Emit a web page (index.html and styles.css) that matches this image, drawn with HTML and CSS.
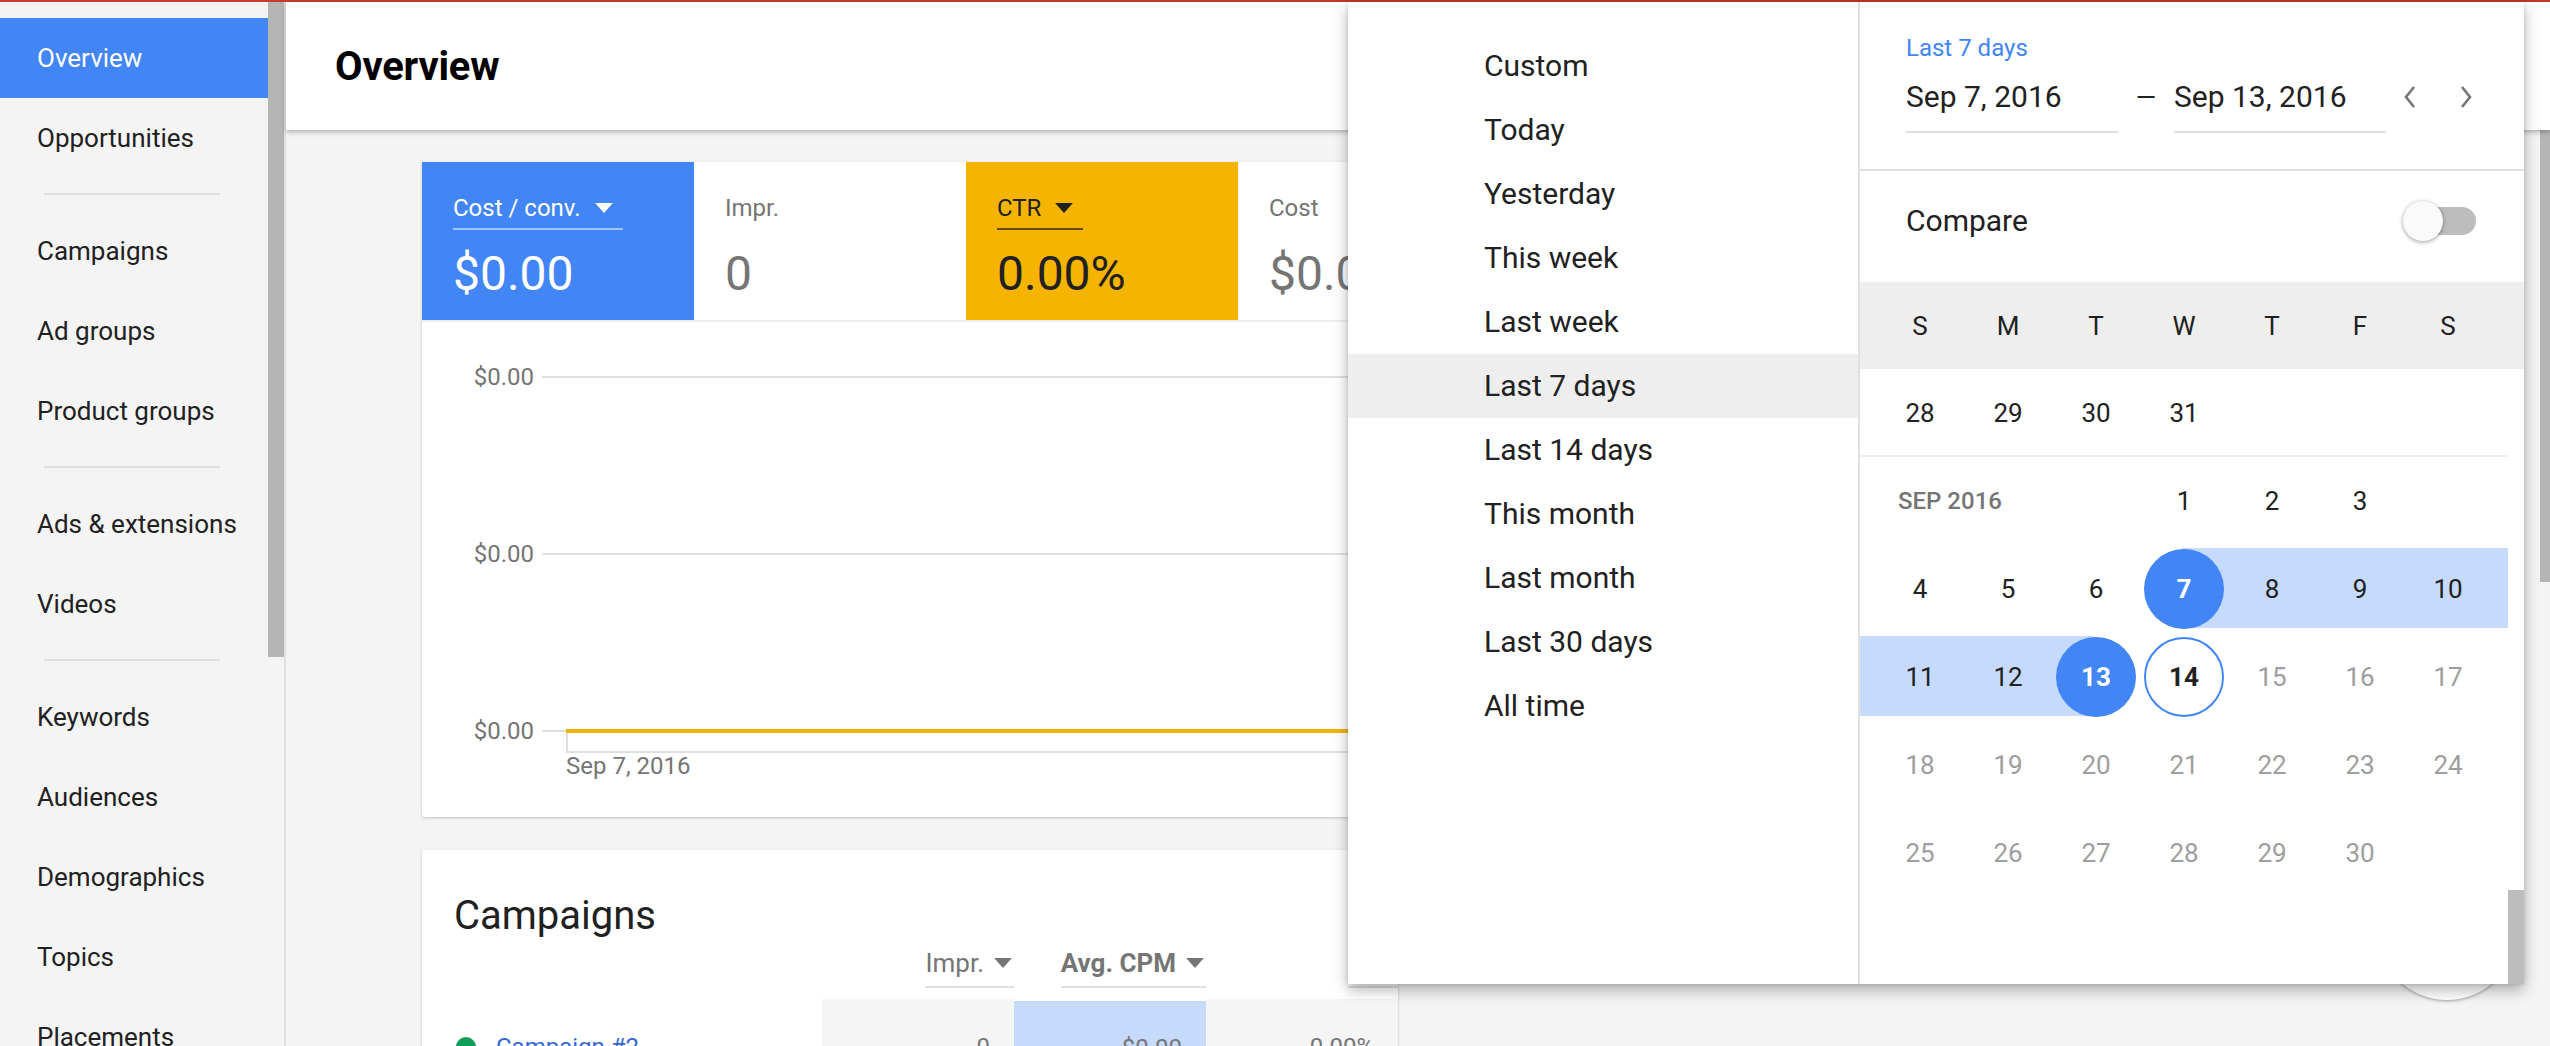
FILE: index.html
```html
<!DOCTYPE html>
<html lang="en">
<head>
<meta charset="utf-8">
<title>Overview</title>
<link rel="stylesheet" href="styles.css">
</head>
<body>
<div class="topline"></div>
<div class="app">
  <nav class="sidebar">
    <a class="nav-item active">Overview</a>
    <a class="nav-item">Opportunities</a>
    <div class="nav-divider"></div>
    <a class="nav-item">Campaigns</a>
    <a class="nav-item">Ad groups</a>
    <a class="nav-item">Product groups</a>
    <div class="nav-divider"></div>
    <a class="nav-item">Ads &amp; extensions</a>
    <a class="nav-item">Videos</a>
    <div class="nav-divider"></div>
    <a class="nav-item">Keywords</a>
    <a class="nav-item">Audiences</a>
    <a class="nav-item">Demographics</a>
    <a class="nav-item">Topics</a>
    <a class="nav-item">Placements</a>
  </nav>
  <div class="side-scroll"><div class="side-thumb"></div></div>
  <div class="side-border"></div>

  <main class="main">
    <header class="page-header"><h1 class="page-title">Overview</h1></header>
    <div class="main-body">
      <div class="content">
        <section class="card metrics-card">
          <div class="tiles">
            <div class="tile tile-blue">
              <div class="tile-label underlined">Cost / conv. <svg class="caret" viewBox="0 0 16 9"><path d="M0 0h16L8 9z"/></svg></div>
              <div class="tile-value">$0.00</div>
            </div>
            <div class="tile">
              <div class="tile-label">Impr.</div>
              <div class="tile-value">0</div>
            </div>
            <div class="tile tile-yellow">
              <div class="tile-label underlined">CTR <svg class="caret" viewBox="0 0 16 9"><path d="M0 0h16L8 9z"/></svg></div>
              <div class="tile-value">0.00%</div>
            </div>
            <div class="tile">
              <div class="tile-label">Cost</div>
              <div class="tile-value">$0.00</div>
            </div>
          </div>
          <div class="chart">
            <div class="grid-row"><span class="axis-label">$0.00</span><span class="grid-line"></span></div>
            <div class="grid-row"><span class="axis-label">$0.00</span><span class="grid-line"></span></div>
            <div class="grid-row"><span class="axis-label">$0.00</span><span class="grid-line base"><span class="tick"></span><span class="series"></span></span></div>
            <div class="x-axis"></div>
            <div class="x-label">Sep 7, 2016</div>
          </div>
        </section>

        <section class="card campaigns-card">
          <h2 class="card-title">Campaigns</h2>
          <div class="table-head">
            <div class="name-col"></div>
            <div class="col"><span class="th">Impr. <svg class="caret" viewBox="0 0 16 9"><path d="M0 0h16L8 9z"/></svg></span></div>
            <div class="col"><span class="th sorted">Avg. CPM <svg class="caret" viewBox="0 0 16 9"><path d="M0 0h16L8 9z"/></svg></span></div>
            <div class="col"><span class="th">CTR</span></div>
          </div>
          <div class="table-row">
            <div class="name-col"><span class="status-dot"></span><a class="campaign-link">Campaign #2</a></div>
            <div class="col cell">0</div>
            <div class="col cell highlight">$0.00</div>
            <div class="col cell">0.00%</div>
          </div>
        </section>
      </div>
      <div class="main-scroll"><div class="main-thumb"></div></div>
    </div>
  </main>
</div>

<div class="fab"></div>

<div class="date-popup">
  <ul class="presets">
    <li class="preset">Custom</li>
    <li class="preset">Today</li>
    <li class="preset">Yesterday</li>
    <li class="preset">This week</li>
    <li class="preset">Last week</li>
    <li class="preset selected">Last 7 days</li>
    <li class="preset">Last 14 days</li>
    <li class="preset">This month</li>
    <li class="preset">Last month</li>
    <li class="preset">Last 30 days</li>
    <li class="preset">All time</li>
  </ul>
  <div class="calendar">
    <div class="range-head">
      <div class="range-name">Last 7 days</div>
      <div class="range-row">
        <div class="date-field">Sep 7, 2016</div>
        <div class="dash">—</div>
        <div class="date-field">Sep 13, 2016</div>
        <button class="chev"><svg viewBox="0 0 14 24"><path d="M11 2L3 12l8 10"/></svg></button>
        <button class="chev"><svg viewBox="0 0 14 24"><path d="M3 2l8 10-8 10"/></svg></button>
      </div>
    </div>
    <div class="compare">
      <span class="compare-label">Compare</span>
      <span class="toggle"><span class="toggle-track"></span><span class="toggle-thumb"></span></span>
    </div>
    <div class="weekdays">
      <span>S</span><span>M</span><span>T</span><span>W</span><span>T</span><span>F</span><span>S</span>
    </div>
    <div class="cal-scroll">
      <div class="cal-body">
        <div class="week">
          <span class="day">28</span><span class="day">29</span><span class="day">30</span><span class="day">31</span>
        </div>
        <div class="month-sep"></div>
        <div class="week">
          <span class="month-label">SEP 2016</span>
          <span class="day">1</span><span class="day">2</span><span class="day">3</span>
        </div>
        <div class="week">
          <span class="band" style="left:322px;right:0"></span>
          <span class="day">4</span><span class="day">5</span><span class="day">6</span>
          <span class="day sel"><span class="num">7</span></span>
          <span class="day">8</span><span class="day">9</span><span class="day">10</span>
        </div>
        <div class="week">
          <span class="band" style="left:0;width:234px"></span>
          <span class="day">11</span><span class="day">12</span>
          <span class="day sel"><span class="num">13</span></span>
          <span class="day today"><span class="num">14</span></span>
          <span class="day future">15</span><span class="day future">16</span><span class="day future">17</span>
        </div>
        <div class="week">
          <span class="day future">18</span><span class="day future">19</span><span class="day future">20</span><span class="day future">21</span><span class="day future">22</span><span class="day future">23</span><span class="day future">24</span>
        </div>
        <div class="week">
          <span class="day future">25</span><span class="day future">26</span><span class="day future">27</span><span class="day future">28</span><span class="day future">29</span><span class="day future">30</span>
        </div>
      </div>
      <div class="cal-track"><div class="cal-thumb"></div></div>
    </div>
  </div>
</div>
</body>
</html>
```

FILE: styles.css
```css
* { box-sizing: border-box; }
html, body {
  margin: 0;
  padding: 0;
  width: 2550px;
  height: 1046px;
  overflow: hidden;
  background: #f4f4f4;
  font-family: Roboto, "Noto Sans", "Liberation Sans", sans-serif;
  color: #212121;
}
body { position: relative; }

.topline { height: 2px; background: #c93a2b; }

.app { display: flex; height: 1044px; }

/* Sidebar */
.sidebar {
  width: 268px;
  flex: none;
  background: #f4f4f4;
  padding-top: 16px;
  display: flex;
  flex-direction: column;
}
.nav-item {
  display: block;
  height: 80px;
  line-height: 80px;
  padding-left: 37px;
  font-size: 26px;
  color: #212121;
  white-space: nowrap;
  flex: none;
}
.nav-item.active { background: #4285f4; color: #fff; }
.nav-divider {
  flex: none;
  height: 2px;
  margin: 15px 48px 16px 44px;
  background: #dedede;
}
.side-scroll { width: 16px; flex: none; background: #f4f4f4; }
.side-thumb { height: 655px; background: #b5b5b5; }
.side-border { width: 2px; flex: none; background: #e0e0e0; }

/* Main */
.main { flex: 1; display: flex; flex-direction: column; min-width: 0; }
.page-header {
  height: 128px;
  flex: none;
  background: #fff;
  box-shadow: 0 2px 5px rgba(0,0,0,0.28);
  display: flex;
  align-items: center;
  padding-left: 49px;
  position: relative;
  z-index: 1;
}
.page-title { margin: 0; font-size: 40px; font-weight: 700; color: #000; letter-spacing: -0.2px; }

.main-body { flex: 1; display: flex; min-height: 0; }
.content { flex: 1; padding: 32px 0 0 136px; }
.main-scroll { width: 10px; flex: none; margin-left: 16px; }
.main-thumb { height: 452px; background: #b5b5b5; }

.card {
  width: 976px;
  background: #fff;
  box-shadow: 0 1px 3px rgba(0,0,0,0.2);
  border-radius: 2px;
}

/* Metric tiles */
.metrics-card { height: 655px; display: flex; flex-direction: column; }
.tiles { display: flex; height: 160px; overflow: hidden; border-bottom: 2px solid #eeeeee; flex: none; }
.tile { width: 272px; flex: none; padding: 30px 0 0 31px; color: #757575; }
.tile-blue { background: #4285f4; color: #fff; }
.tile-yellow { background: #f4b400; color: #212121; }
.tile-label {
  display: inline-flex;
  align-items: center;
  gap: 14px;
  height: 38px;
  font-size: 24px;
  padding-bottom: 4px;
  border-bottom: 2px solid transparent;
}
.tile-label.underlined { padding-right: 10px; }
.tile-blue .underlined { border-bottom-color: rgba(255,255,255,0.5); }
.tile-yellow .underlined { border-bottom-color: rgba(0,0,0,0.6); }
.caret { width: 18px; height: 10px; fill: currentColor; flex: none; }
.tile-value { font-size: 48px; line-height: 56px; margin-top: 16px; }

/* Chart */
.chart { flex: 1; padding-top: 39px; position: relative; }
.grid-row { display: flex; align-items: center; height: 32px; margin-bottom: 145px; }
.grid-row:nth-child(3) { margin-bottom: 0; }
.axis-label {
  width: 112px;
  text-align: right;
  font-size: 24px;
  color: #757575;
  flex: none;
}
.grid-line { flex: 1; height: 2px; background: #e0e0e0; margin-left: 8px; display: flex; align-items: center; }
.grid-line.base { background: none; }
.tick { width: 24px; height: 2px; background: #e0e0e0; flex: none; }
.series { flex: 1; height: 4px; background: #f4b400; }
.x-axis {
  margin-left: 144px;
  height: 20px;
  margin-top: -14px;
  border-left: 2px solid #e0e0e0;
  border-bottom: 2px solid #e0e0e0;
}
.x-label { margin-left: 144px; font-size: 24px; color: #757575; line-height: 26px; }

/* Campaigns */
.campaigns-card { margin-top: 33px; height: 240px; }
.card-title { margin: 0; padding: 42px 0 0 32px; font-size: 40px; font-weight: 400; line-height: 48px; color: #212121; }
.table-head { display: flex; height: 48px; align-items: flex-end; }
.name-col { width: 400px; flex: none; display: flex; align-items: center; }
.col { width: 192px; flex: none; display: flex; justify-content: flex-end; }
.th {
  display: inline-flex;
  align-items: center;
  gap: 10px;
  font-size: 26px;
  color: #757575;
  height: 46px;
  border-bottom: 2px solid #e0e0e0;
  padding-bottom: 2px;
  padding-right: 2px;
}
.th.sorted { font-weight: 700; }
.table-row { display: flex; margin-top: 11px; height: 96px; }
.table-row .name-col { background: #fff; padding-left: 34px; gap: 20px; }
.status-dot { width: 20px; height: 20px; border-radius: 50%; background: #0f9d58; }
.campaign-link { font-size: 24px; color: #3367d6; text-decoration: underline; }
.cell {
  background: #f5f5f5;
  align-items: center;
  padding-right: 24px;
  font-size: 24px;
  color: #757575;
}
.cell.highlight { background: #c6dafc; margin-top: 2px; }

/* FAB */
.fab {
  position: absolute;
  left: 2377px;
  top: 860px;
  width: 140px;
  height: 140px;
  border-radius: 50%;
  background: #fff;
  box-shadow: 0 1px 3px rgba(0,0,0,0.35);
}

/* Date popup */
.date-popup {
  position: absolute;
  left: 1348px;
  top: 2px;
  width: 1176px;
  height: 982px;
  background: #fff;
  box-shadow: 0 6px 14px rgba(0,0,0,0.3), 0 0 4px rgba(0,0,0,0.12);
  display: flex;
  z-index: 5;
}
.presets {
  list-style: none;
  margin: 0;
  padding: 32px 0 0 0;
  width: 512px;
  flex: none;
  border-right: 2px solid #e0e0e0;
}
.preset {
  height: 64px;
  line-height: 64px;
  padding-left: 136px;
  font-size: 30px;
  color: #212121;
}
.preset.selected { background: #eeeeee; }

.calendar { flex: 1; display: flex; flex-direction: column; min-width: 0; }
.range-head { height: 169px; flex: none; padding: 30px 0 0 46px; border-bottom: 2px solid #e0e0e0; }
.range-name { font-size: 24px; line-height: 32px; color: #4285f4; }
.range-row { display: flex; align-items: flex-start; margin-top: 15px; }
.date-field {
  width: 212px;
  font-size: 30px;
  line-height: 36px;
  height: 54px;
  padding-bottom: 16px;
  border-bottom: 2px solid #e0e0e0;
  color: #212121;
}
.dash { width: 56px; text-align: center; font-size: 26px; line-height: 36px; color: #212121; }
.chev {
  width: 32px;
  height: 36px;
  border: 0;
  padding: 0;
  background: none;
  display: flex;
  align-items: center;
  justify-content: center;
}
.chev:first-of-type { margin-left: 8px; }
.chev + .chev { margin-left: 24px; }
.chev svg { width: 14px; height: 24px; fill: none; stroke: #757575; stroke-width: 2.6; }

.compare {
  height: 111px;
  flex: none;
  padding: 0 48px 12px 46px;
  display: flex;
  align-items: center;
  justify-content: space-between;
}
.compare-label { font-size: 30px; color: #212121; }
.toggle { position: relative; width: 73px; height: 40px; }
.toggle-track {
  position: absolute;
  right: 0;
  top: 6px;
  width: 66px;
  height: 28px;
  border-radius: 14px;
  background: #bdbdbd;
}
.toggle-thumb {
  position: absolute;
  left: 0;
  top: 0;
  width: 40px;
  height: 40px;
  border-radius: 50%;
  background: #fafafa;
  box-shadow: 0 1px 4px rgba(0,0,0,0.4);
}

.weekdays {
  height: 87px;
  flex: none;
  background: #eeeeee;
  display: grid;
  grid-template-columns: repeat(7, 88px);
  padding: 0 30px 0 16px;
  align-items: center;
  justify-items: center;
  font-size: 26px;
  color: #212121;
}

.cal-scroll { flex: 1; display: flex; min-height: 0; }
.cal-body { flex: 1; }
.cal-track { width: 16px; flex: none; display: flex; flex-direction: column; justify-content: flex-end; }
.cal-thumb { height: 94px; background: #bdbdbd; }

.week {
  position: relative;
  height: 88px;
  display: grid;
  grid-template-columns: repeat(7, 88px);
  padding: 0 14px 0 16px;
  align-items: center;
  justify-items: center;
}
.month-sep { height: 2px; background: #eeeeee; margin-top: -2px; position: relative; }
.month-label {
  grid-column: span 3;
  justify-self: start;
  padding-left: 22px;
  font-size: 24px;
  font-weight: 500;
  color: #757575;
}
.band {
  position: absolute;
  top: 3px;
  height: 80px;
  background: #c6dafc;
}
.day {
  position: relative;
  font-size: 26px;
  color: #212121;
  width: 80px;
  height: 80px;
  display: flex;
  align-items: center;
  justify-content: center;
}
.day.future { color: #9e9e9e; }
.num {
  width: 80px;
  height: 80px;
  border-radius: 50%;
  display: flex;
  align-items: center;
  justify-content: center;
  font-weight: 700;
}
.day.sel .num { background: #4285f4; color: #fff; }
.day.today .num { background: #fff; border: 2px solid #4285f4; color: #212121; }
```
